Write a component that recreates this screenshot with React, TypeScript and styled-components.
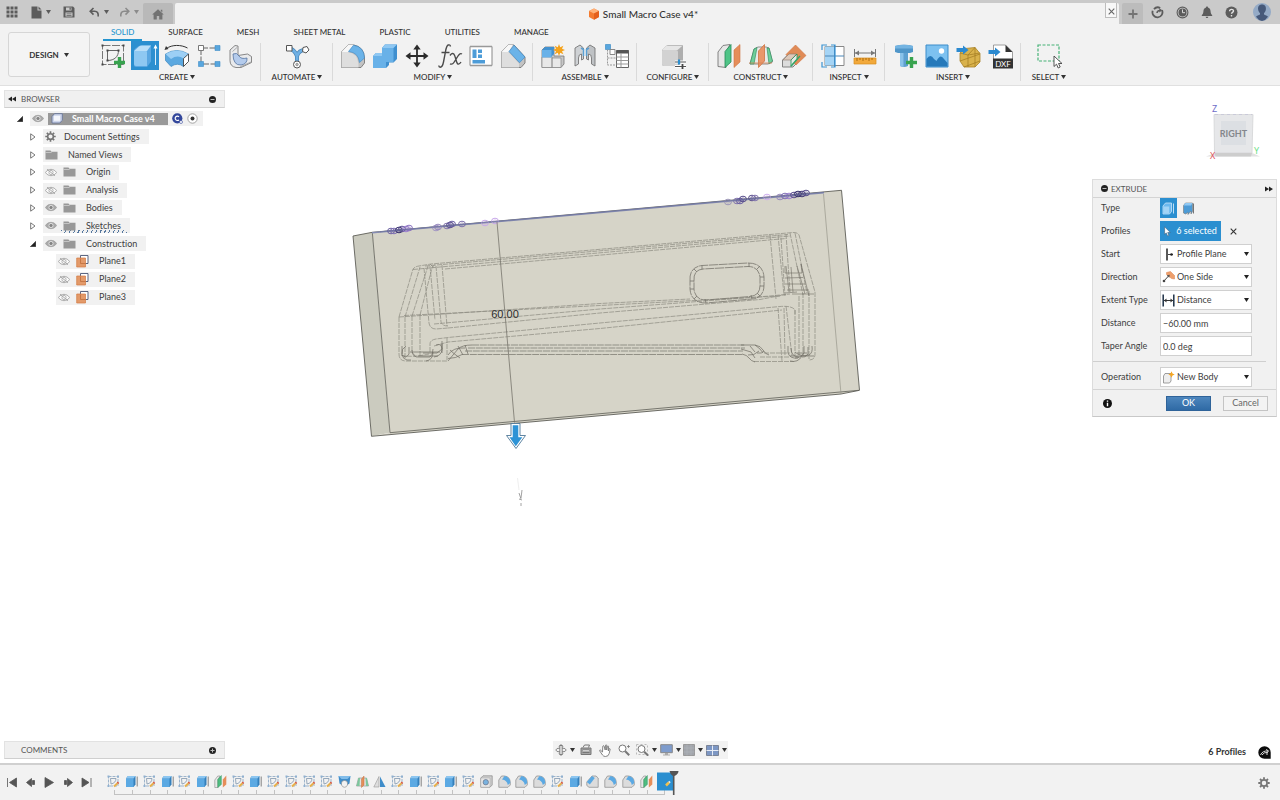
import React from 'react';
import styled, { createGlobalStyle } from 'styled-components';

const GlobalStyle = createGlobalStyle`
  *, *::before, *::after { box-sizing: border-box; }
  body { margin: 0; background: #fff; font-variant-ligatures: none; }
  body, button, input, select {
    font-family: Lato, "Noto Sans", sans-serif;
    font-size: 9px;
    line-height: 12px;
    color: #3d3d3d;
  }
  button { padding: 0; border: 0; background: none; cursor: pointer; }
  svg { display: block; flex: none; }
  ul { list-style: none; margin: 0; padding: 0; }
`;

const INK = '#5c5c5c';
const BLUE = '#6bb3e8';
const BLUE_DK = '#3a86c4';
const BLUE_LT = '#9ccff5';

/* ---------- page frame ---------- */

const Page = styled.div`
  min-height: 100vh;
  display: flex;
  flex-direction: column;
  background: #fff;
`;

const TitleBar = styled.header`
  display: flex;
  align-items: stretch;
  height: 24px;
  padding-top: 3px;
  background: #cacaca;
`;

const BarButton = styled.button<{ $w: number }>`
  width: ${p => p.$w}px;
  display: flex;
  align-items: center;
  justify-content: center;
  gap: 4px;
  padding-bottom: 3px;
`;

const HomeTab = styled.button`
  width: 30px;
  margin: 0 2px;
  display: flex;
  align-items: center;
  justify-content: center;
  padding-top: 2px;
  background: #b9b9b9;
  border-radius: 2px 2px 0 0;
`;

const DocumentTab = styled.div`
  flex: 1;
  display: flex;
  align-items: flex-start;
  background: #f2f2f2;
  border-radius: 2px 2px 0 0;
`;

const DocumentTitle = styled.h1`
  flex: 1;
  margin: 0;
  padding: 4px 0 0 6px;
  display: flex;
  justify-content: center;
  align-items: center;
  gap: 3px;
  font-size: 10px;
  line-height: 14px;
  font-weight: 500;
  color: #333;
`;

const CloseTab = styled.button`
  width: 12px;
  height: 15px;
  margin-right: 2px;
  display: flex;
  align-items: flex-end;
  justify-content: center;
  padding-bottom: 2px;
  border: 1px solid #bdbdbd;
  border-top: 0;
  background: #f8f8f8;
`;

const NewTab = styled.button`
  width: 21px;
  margin: 0 2px 0 3px;
  display: flex;
  align-items: center;
  justify-content: center;
  background: #bcbcbc;
  border-radius: 2px 2px 0 0;
`;

/* ---------- ribbon ---------- */

const Ribbon = styled.div`
  display: flex;
  height: 62px;
  background: #f2f2f2;
  border-bottom: 1px solid #e0e0e0;
`;

const Workspace = styled.button`
  width: 82px;
  height: 45px;
  margin: 8px 3px 0 8px;
  display: flex;
  align-items: center;
  justify-content: center;
  gap: 5px;
  border: 1px solid #d6d6d6;
  border-radius: 3px;
  background: #f4f4f4;
  font-size: 8px;
  font-weight: 700;
  color: #333;
`;

const RibbonMain = styled.div`
  display: flex;
  flex-direction: column;
  min-width: 0;
`;

const Tabs = styled.nav`
  display: flex;
  gap: 18px;
  height: 17px;
  padding-left: 10px;
`;

const Tab = styled.a<{ $on?: boolean }>`
  padding: 2px 8px 0;
  font-size: 8px;
  line-height: 12px;
  font-weight: 500;
  text-decoration: none;
  white-space: nowrap;
  color: ${p => (p.$on ? '#1f95cf' : '#333')};
  border-bottom: 2px solid ${p => (p.$on ? '#2494cf' : 'transparent')};
`;

const Groups = styled.div`
  display: flex;
`;

const Group = styled.section<{ $min?: number; $last?: boolean }>`
  min-width: ${p => p.$min ?? 72}px;
  height: 41px;
  padding: 0 4px;
  display: flex;
  flex-direction: column;
  align-items: center;
  background: ${p => (p.$last ? 'none' : 'linear-gradient(#dadada, #dadada) right 2px / 1px 38px no-repeat')};
`;

const GroupIcons = styled.div`
  display: flex;
`;

const Tool = styled.button<{ $on?: boolean }>`
  width: 32px;
  height: 29px;
  display: grid;
  place-items: center;
  background: ${p => (p.$on ? 'linear-gradient(#2b8fd0, #2b8fd0) center / 28px 29px no-repeat' : 'none')};
`;

const GroupMenu = styled.button`
  display: flex;
  align-items: center;
  gap: 2px;
  font-size: 8px;
  line-height: 14px;
  font-weight: 500;
  color: #2e2e2e;
  white-space: nowrap;
`;

/* ---------- canvas ---------- */

const Canvas = styled.main`
  flex: 1;
  display: grid;
  grid-template-columns: 221px 1fr 188px;
  grid-template-rows: 1fr;
  padding: 4px 0 0 4px;
`;

const Stage = styled.div`
  display: flex;
  justify-content: center;
  align-items: flex-start;
  padding: 90px 106px 0 0;
`;

const SideHeader = styled.div`
  display: flex;
  align-items: center;
  height: 18px;
  padding: 0 8px 0 3px;
  gap: 5px;
  background: #f0f0f0;
  border: 1px solid #e2e2e2;
  border-bottom-color: #cfcfcf;
  font-size: 8px;
  color: #555;
`;

const SideTitle = styled.h2<{ $indent?: number }>`
  flex: 1;
  margin: 0;
  padding-left: ${p => p.$indent ?? 0}px;
  font: inherit;
`;

const Tree = styled.ul`
  display: grid;
  grid-auto-rows: 1fr;
  height: 196px;
  margin-top: 2px;
`;

const Node = styled.li<{ $level: number }>`
  display: flex;
  align-items: center;
  padding-left: ${p => [10, 23, 23][p.$level]}px;
`;

const Twisty = styled.button`
  width: 16px;
  height: 12px;
  display: flex;
  align-items: center;
  padding-left: 3px;
`;

const TwistySpace = styled.span`
  width: 29px;
`;

const Chip = styled.div<{ $hatched?: boolean }>`
  height: 15px;
  display: flex;
  align-items: center;
  gap: 6px;
  padding: 0 9px 0 2px;
  background: ${p =>
    p.$hatched
      ? 'repeating-linear-gradient(115deg, #56789f 0 1px, transparent 1px 4px) 18px 12px / 66px 3px no-repeat, #f1f1f1'
      : '#f1f1f1'};
  white-space: nowrap;
`;

const NodeName = styled.span<{ $space: number }>`
  padding-left: ${p => p.$space}px;
`;

const RootChip = styled.div`
  height: 15px;
  display: flex;
  align-items: center;
  gap: 4px;
  padding: 0 5px 0 2px;
  background: #f1f1f1;
`;

const RootName = styled.span`
  height: 12px;
  display: flex;
  align-items: center;
  gap: 9px;
  width: 120px;
  padding-left: 3px;
  background: #999;
  color: #fff;
  font-weight: 700;
  white-space: nowrap;
`;

const Right = styled.aside`
  display: flex;
  flex-direction: column;
  padding-right: 3px;
`;

const CubeSlot = styled.div`
  display: flex;
  justify-content: flex-end;
  height: 89px;
  padding: 10px 15px 0 0;
`;

/* ---------- extrude panel ---------- */

const Panel = styled.form`
  border: 1px solid #dcdcdc;
  border-bottom-color: #c8c8c8;
  background: #f1f1f1;
`;

const PanelHeader = styled.div`
  display: flex;
  align-items: center;
  gap: 3px;
  height: 18px;
  padding: 0 3px 0 8px;
  border-bottom: 1px solid #d4d4d4;
  font-size: 8px;
  color: #555;
`;

const Fields = styled.div`
  display: grid;
  grid-template-columns: 59px 92px;
  grid-auto-rows: 20px;
  row-gap: 3px;
  align-items: center;
  padding: 0 0 5px 8px;
`;

const Operation = styled(Fields)`
  margin-right: 10px;
  padding: 5px 0 2px 8px;
  border-top: 1px solid #cfcfcf;
`;

const Inline = styled.div`
  display: flex;
  align-items: center;
  gap: 3px;
`;

const TypeButton = styled.button<{ $on?: boolean }>`
  width: 17px;
  height: 20px;
  display: grid;
  place-items: center;
  background: ${p => (p.$on ? '#2b8fd0' : 'none')};
`;

const Selected = styled.button`
  width: 61px;
  height: 20px;
  display: flex;
  align-items: center;
  justify-content: center;
  gap: 5px;
  background: #2b8fd0;
  color: #fff;
`;

const ClearButton = styled.button`
  width: 18px;
  height: 20px;
  display: grid;
  place-items: center;
`;

const Picker = styled.div`
  display: grid;
  grid-template-columns: 15px 1fr 10px;
  align-items: center;
  height: 20px;
  border: 1px solid #d0d0d0;
  background: #fff;
  & > svg { grid-row: 1; grid-column: 1; pointer-events: none; z-index: 1; justify-self: center; }
  & > svg:last-child { grid-column: 3; }
`;

const PickerSelect = styled.select`
  grid-row: 1;
  grid-column: 1 / -1;
  width: 100%;
  height: 18px;
  padding: 0 12px 0 16px;
  border: 0;
  background: transparent;
  appearance: none;
`;

const TextBox = styled.input`
  width: 100%;
  height: 20px;
  padding: 0 2px;
  border: 1px solid #d0d0d0;
  background: #fff;
`;

const PanelFooter = styled.div`
  display: flex;
  align-items: center;
  height: 27px;
  padding: 0 8px 0 10px;
  border-top: 1px solid #d4d4d4;
`;

const Action = styled.button<{ $primary?: boolean }>`
  width: 45px;
  height: 15px;
  margin-left: ${p => (p.$primary ? 'auto' : '12px')};
  border: 1px solid ${p => (p.$primary ? '#2f6399' : '#c4c4c4')};
  background: ${p => (p.$primary ? 'linear-gradient(#4d86bd, #2f6aa5)' : '#f3f3f3')};
  color: ${p => (p.$primary ? '#fff' : '#666')};
`;

/* ---------- lower bars ---------- */

const LowerRow = styled.div`
  display: grid;
  grid-template-columns: 1fr auto 1fr;
  align-items: center;
  padding: 0 4px 4px;
`;

const Comments = styled.div`
  width: 221px;
`;

const NavBar = styled.div`
  display: flex;
  height: 18px;
  background: #f2f2f2;
`;

const Status = styled.div`
  display: flex;
  align-items: center;
  justify-content: flex-end;
  gap: 12px;
  padding: 4px 5px 0 0;
  font-weight: 700;
  color: #333;
`;

const NavButton = styled.button<{ $w: number }>`
  width: ${p => p.$w}px;
  display: flex;
  align-items: center;
  justify-content: center;
  gap: 3px;
`;

const Timeline = styled.footer`
  display: flex;
  height: 37px;
  border-top: 2px solid #d0d0d0;
  background: #f2f2f2;
`;

const Playback = styled.div`
  width: 93px;
  margin: 0 9px 0 3px;
  display: grid;
  grid-template-columns: repeat(5, 1fr);
  height: 35px;
`;

const CenteredButton = styled.button`
  display: grid;
  place-items: center;
`;

const History = styled.div`
  width: 550px;
  display: flex;
  flex-direction: column;
  padding-top: 8px;
`;

const Features = styled.div`
  display: grid;
  grid-template-columns: repeat(31, 1fr);
  height: 17px;
`;

const Rail = styled.div`
  display: grid;
  grid-template-columns: repeat(31, 1fr);
  width: 551px;
  height: 5px;
  margin-left: 9px;
`;

const RailCell = styled.span`
  border: solid #c2c2c2;
  border-width: 0 0 1px 1px;
  &:last-child { border-right-width: 1px; }
`;

const Marker = styled.button`
  margin: 5px auto 0 1px;
  width: 24px;
  height: 26px;
  display: flex;
  z-index: 1;
`;

const SettingsButton = styled(CenteredButton)`
  width: 33px;
`;

/* ---------- small glyphs ---------- */

const Caret = ({ c = '#333', s = 5 }: { c?: string; s?: number }) => (
  <svg width={s} height={s - 1} viewBox="0 0 5 4"><path d="M0 0h5L2.500 4z" fill={c} /></svg>
);

const GridDots = () => (
  <svg width="12" height="12" viewBox="0 0 12 12" fill={INK}>
    {[0, 4, 8].map(y => [0, 4, 8].map(x => <rect key={`${x}${y}`} x={x + 0.5} y={y + 0.5} width="3" height="3" />))}
  </svg>
);
const FileGlyph = () => (
  <svg width="11" height="13" viewBox="0 0 11 13"><path d="M.5.5h6v4h4v8H.5zM7.500.5l3 3h-3z" fill={INK} /></svg>
);
const SaveGlyph = () => (
  <svg width="12" height="12" viewBox="0 0 12 12"><path d="M.5.5h9.500l1.500 1.500v9.500H.5zM3 1.500v3h5.500v-3zM2.500 6.500v4h7v-4z" fill={INK} fillRule="evenodd" /><path d="M6.500 1.500h1.300v2.300H6.500zM3.500 7.500h5v.8h-5zM3.500 9.200h5v.8h-5z" fill={INK} /></svg>
);
const Undo = ({ flip }: { flip?: boolean }) => (
  <svg width="11" height="11" viewBox="0 0 11 11">
    <g transform={flip ? 'translate(11 0) scale(-1 1)' : undefined} fill="none" stroke={flip ? '#8b8b8b' : INK} strokeWidth="1.600">
      <path d="M4.500 1 1.200 4.300l3.300 3.300M1.500 4.300h4.200c2.600 0 3.800 1.600 3.500 5.200" />
    </g>
  </svg>
);
const HomeGlyph = () => (
  <svg width="12" height="11" viewBox="0 0 12 11"><path d="M6 .3 11.800 5.600h-1.400V10.500H7.200V7H4.800v3.500H1.600V5.600H.2zM8.800.8h1.500v2.500L8.800 2z" fill="#737373" /></svg>
);
const OrangeCube = () => (
  <svg width="12" height="12" viewBox="0 0 12 12">
    <path d="M6 .5 11 3v6l-5 2.700L1 9V3z" fill="#f47b30" /><path d="M6 .5 11 3 6 5.500 1 3z" fill="#ffb27a" /><path d="M6 5.500 11 3v6l-5 2.700z" fill="#e4601c" />
  </svg>
);
const Cross = ({ s = 7, c = '#666' }: { s?: number; c?: string }) => (
  <svg width={s} height={s} viewBox="0 0 7 7"><path d="m.7.7 5.600 5.600M6.300.7.7 6.300" stroke={c} strokeWidth="1.100" /></svg>
);
const Plus = () => (
  <svg width="10" height="10" viewBox="0 0 10 10"><path d="M5 .5v9M.5 5h9" stroke="#747474" strokeWidth="1.800" /></svg>
);
const Extensions = () => (
  <svg width="13" height="13" viewBox="0 0 13 13" fill="none" stroke={INK}>
    <path d="M3 3.200a5 5 0 0 1 6.200-1.200M11 4.200a5 5 0 1 1-9.300.6" strokeWidth="1.800" />
    <path d="M6 7q0-2.300 3-2.500" strokeWidth="1.500" /><path d="m8.300 2.300 3 2-3 2.200z" fill={INK} stroke="none" />
  </svg>
);
const Clock = () => (
  <svg width="13" height="13" viewBox="0 0 13 13"><circle cx="6.500" cy="6.500" r="5.400" fill="none" stroke={INK} strokeWidth="1.100" /><circle cx="6.500" cy="6.500" r="4" fill={INK} /><path d="M6.500 3.500v3.200H9" stroke="#d8d8d8" fill="none" /></svg>
);
const Bell = () => (
  <svg width="12" height="13" viewBox="0 0 12 13"><path d="M6 .5c.8 0 1 .5 1 1 2 .6 2.500 2.300 2.600 4 .1 2 .8 2.800 1.600 3.700v.8H.8v-.8c.8-.9 1.500-1.700 1.600-3.700.1-1.700.6-3.400 2.600-4 0-.5.2-1 1-1zM4.700 10.800h2.600c0 1.700-2.600 1.700-2.600 0z" fill={INK} /></svg>
);
const Help = () => (
  <svg width="13" height="13" viewBox="0 0 13 13"><circle cx="6.500" cy="6.500" r="6" fill={INK} /><path d="M4.600 5.200c0-2.500 3.900-2.400 3.900-.2 0 1.400-2 1.400-2 2.800M6.500 9v1.400" fill="none" stroke="#e2e2e2" strokeWidth="1.400" /></svg>
);
const Avatar = () => (
  <svg width="18" height="18" viewBox="0 0 18 18">
    <circle cx="9" cy="9" r="9" fill="#94aac6" />
    <path d="M9 1.500c3 0 4.200 2.200 3.900 4.700-.2 1.700-.9 3-1.900 3.900v1.500c1.200.8 3.300 1 4 2.200A9 9 0 0 1 9 18a9 9 0 0 1-6-4.200c.7-1.200 2.800-1.400 4-2.200v-1.500C6 9.200 5.300 7.900 5.100 6.200 4.800 3.700 6 1.500 9 1.500z" fill="#46597a" />
  </svg>
);
const Gear = ({ s = 12 }: { s?: number }) => (
  <svg width={s} height={s} viewBox="0 0 12 12" fill="none" stroke="#757575">
    <circle cx="6" cy="6" r="3.100" strokeWidth="1.700" />
    <path d="M6 .3v2M6 9.700v2M.3 6h2M9.700 6h2M2 2l1.400 1.400M8.600 8.600 10 10M10 2 8.600 3.400M3.400 8.600 2 10" strokeWidth="1.800" />
  </svg>
);
const Dot = ({ plus }: { plus?: boolean }) => (
  <svg width="7" height="7" viewBox="0 0 7 7"><circle cx="3.500" cy="3.500" r="3.500" fill="#222" /><path d={plus ? 'M1.500 3.500h4M3.500 1.500v4' : 'M1.500 3.500h4'} stroke="#bbb" /></svg>
);
const DoubleArrow = ({ left }: { left?: boolean }) => (
  <svg width="8" height="6" viewBox="0 0 8 6"><path d={left ? 'M4 .5v5L0 3zM8 .5v5L4 3z' : 'M0 .5v5L4 3zM4 .5v5L8 3z'} fill="#222" /></svg>
);
const Closed = () => (
  <svg width="6" height="8" viewBox="0 0 6 8"><path d="M.7.8v6.400L5 4z" fill="#fff" stroke="#777" /></svg>
);
const Opened = () => (
  <svg width="6" height="6" viewBox="0 0 6 6"><path d="M5.800.2v5.600H.2z" fill="#222" stroke="#222" strokeWidth=".4" /></svg>
);
const Eye = ({ off }: { off?: boolean }) => (
  <svg width="12" height="9" viewBox="0 0 12 9">
    <path d="M.5 4.500C3 .3 9 .3 11.500 4.500 9 8.700 3 8.700.5 4.500z" fill={off ? '#fafafa' : '#a9a9a9'} stroke="#a3a3a3" strokeWidth=".9" />
    <circle cx="6" cy="4.500" r="2.100" fill={off ? 'none' : '#858585'} stroke={off ? '#a3a3a3' : '#eee'} strokeWidth=".8" />
    {off && <path d="m2 1.200 8 6.600" stroke="#a3a3a3" strokeWidth=".9" />}
  </svg>
);
const Folder = () => (
  <svg width="13" height="10" viewBox="0 0 13 10"><path d="M.5.5h5l1 1.200h6V9.500H.5z" fill="#989898" /><path d="M.5 2.500h5.500l1-.8" stroke="#d8d8d8" strokeWidth=".7" fill="none" /></svg>
);
const PlaneGlyph = () => (
  <svg width="13" height="13" viewBox="0 0 13 13"><path d="M4.500 3.500v-3h7.500v8H9.500" fill="#fff" stroke="#4a5675" strokeWidth=".9" /><path d="M.7 3h8.800v9H.7z" fill="#e39a6a" stroke="#d27a42" strokeWidth=".7" /><path d="M4.500 3.500v5h5" fill="none" stroke="#c0703d" strokeWidth=".8" /></svg>
);
const ComponentGlyph = () => (
  <svg width="12" height="11" viewBox="0 0 12 11"><path d="M1 3.500 3.500.7h7.800v6.500L8.800 10H1z" fill="#cdd5ea" stroke="#5f6f95" strokeWidth=".8" /><path d="M3 2.800h6v5H3z" fill="#f4f6fc" /></svg>
);
const CBadge = () => (
  <svg width="11" height="11" viewBox="0 0 11 11"><circle cx="5.300" cy="5.300" r="5.100" fill="#33479b" /><path d="M7 3.800a2.200 2.200 0 1 0 0 3" fill="none" stroke="#fff" strokeWidth="1.200" /><circle cx="9" cy="9" r="1.500" fill="#fff" stroke="#33479b" strokeWidth=".6" /></svg>
);
const RadioGlyph = () => (
  <svg width="11" height="11" viewBox="0 0 11 11"><circle cx="5.500" cy="5.500" r="4.700" fill="#fff" stroke="#8f8f8f" strokeWidth=".8" /><circle cx="5.500" cy="5.500" r="2" fill="#333" /></svg>
);

/* ---------- ribbon icons, 28 x 28 ---------- */

const I = ({ children, s = 28 }: { children: React.ReactNode; s?: number }) => (
  <svg width={s} height={s} viewBox="0 0 28 28" fill="none">{children}</svg>
);
const greenPlus = <path d="M20.500 15v11M15 20.500h11" stroke="#38a34f" strokeWidth="3.400" />;
const star = (x: number, y: number) => (
  <path transform={`translate(${x} ${y})`} d="m0-6 1.200 3.200L4.400-4.300 3-1.300 6 0 3 1.300l1.400 3-3.200-1.500L0 6l-1.200-3.200-3.200 1.500 1.400-3L-6 0l3-1.300-1.400-3 3.200 1.500z" fill="#f5a31c" />
);

const icons: Record<string, React.ReactNode> = {
  sketch: (
    <I>
      <path d="M3.500 3.500h21v19h-21z" stroke="#777" strokeDasharray="8 1.500" />
      <path d="M8.500 8.500h11c0 6-4 10-11 10z" stroke="#666" />
      <path d="M7.500 7.500h2v2h-2zM18.500 7.500h2v2h-2zM7.500 17.500h2v2h-2zM2.500 2.500h2v2h-2zM23.500 2.500h2v2h-2zM2.500 21.500h2v2h-2z" fill="#444" />
      {greenPlus}
    </I>
  ),
  extrude: (
    <I>
      <path d="M3 9q0-2 2-3l2-1.500q1-1 3-1h10v16L16 25H5q-2 0-2-2z" fill="#5aa7e2" />
      <path d="M3 9h12q1 0 1 1v14H5q-2 0-2-2z" fill="#8ec8f2" />
      <path d="M3 9 8 4.500q1-1 3-1h9L16 9z" fill="#b9def8" />
      <path d="M24.500 23V5" stroke="#d8eefc" /><path d="m22.500 6.500 2-4 2 4z" fill="#fff" />
    </I>
  ),
  revolve: (
    <I>
      <path d="M3.500 6.500C9 2.500 18 2.500 24.500 6" stroke="#333" /><path d="m1.500 8 1.500-4 2.500 3z" fill="#333" />
      <path d="M2.500 12q11-7 23 0v7l-5 5.500q-6-4.500-12.500 0l-5.500-6z" fill="#5ba8e0" stroke="#3c86bf" strokeWidth=".7" />
      <path d="M2.500 12q11-7 23 0l-5 4.500q-6-4-12.500.5z" fill={BLUE_LT} />
      <path d="m20.500 16.500 5-4.500v7.500l-5 5z" fill="#fff" stroke="#444" strokeWidth=".9" />
    </I>
  ),
  pattern: (
    <I>
      <path d="M6 6h17M6 6v16h17" stroke="#666" strokeDasharray="7 1.500" />
      <path d="M3.500 3.500h5v5h-5z" fill="#fff" stroke="#777" /><path d="M20 3.500h5v5h-5zM3.500 19.500h5v5h-5zM20 19.500h5v5h-5z" fill="#58a6de" stroke="#3f8ec7" strokeWidth=".6" />
    </I>
  ),
  form: (
    <I>
      <path d="m3 8 5-4.500 3 .5v9.500l9.500-1.500 4 2.500v6L14 25.500H9q-6-1-6-7z" fill="#e9eaec" stroke="#7c7c7c" strokeWidth=".9" />
      <path d="M5.500 9.500 10 5.500M13 25l11-5" stroke="#999" strokeWidth=".8" />
      <path d="M6 12q4-2 6 2 2 3.500 8 2 .5 6-6 7-8 .5-8-11z" fill="#b4cbec" stroke="#55739f" strokeWidth=".8" />
    </I>
  ),
  automate: (
    <I>
      <path d="M6 6q6 2 8 8 2-6 8-6M14 13v9" stroke="#4a86b8" strokeWidth="4" /><path d="M6 6q6 2 8 8 2-6 8-6M14 13v9" stroke="#6fb0e4" strokeWidth="2.600" />
      <path d="M3.500 3.500h5.500V9H3.500z" fill="#fff" stroke="#555" /><path d="m20 5.500 4-1 2 3.500-3 3-3.500-1.500z" fill="#fff" stroke="#555" /><circle cx="14" cy="22.500" r="3.500" fill="#fff" stroke="#555" /><circle cx="14" cy="22.500" r="1.300" fill="#bbb" stroke="#777" strokeWidth=".6" />
    </I>
  ),
  fillet: (
    <I>
      <path d="M2.500 10 9 3h6q10 2 10.500 13v5L22 25.500H2.500z" fill="#c3c3c3" stroke="#777" strokeWidth=".9" />
      <path d="M2.500 10h6q10 1 11 12v3.500h-17z" fill="#dedede" /><path d="M2.500 10 9 3h6l-5.500 7z" fill="#f7f7f7" />
      <path d="m9.500 9.500 5-6.300Q25 4.500 25.500 16l-5 4.500Q19.500 10.500 9.500 9.500z" fill={BLUE} stroke={BLUE_DK} strokeWidth=".6" />
    </I>
  ),
  combine: (
    <I>
      <path d="M2 14 5 11h6V6l3-3.500h12V17l-3.500 3.500H18V23l-3 3H2z" fill="#3f8fcf" />
      <path d="M2 14h9V6h11.500v14H15v6H2z" fill="#68b1e8" /><path d="m11 6 3-3.500h12L22.500 6zM2 14l3-3h6v3z" fill="#8fc8f3" />
    </I>
  ),
  move: (
    <I>
      <path d="M14 5v18M5 14h18" stroke="#2b2b2b" strokeWidth="1.800" />
      <path d="m14 2.500 3.700 5h-7.400zM14 25.500l-3.700-5h7.400zM2.500 14l5-3.700v7.400zM25.500 14l-5 3.700v-7.400z" fill="#2b2b2b" />
    </I>
  ),
  parameters: (
    <I>
      <path d="M15.500 4.500q-.5-2.200-2.300-1.500-1.700.7-2.700 6.500L8.500 20q-1 5-3.200 5.200-1.500 0-1.500-1.700M6.500 10.500h8" stroke="#4a4a4a" strokeWidth="1.400" />
      <path d="M15 13.500q2-3 3.800-1.500.9 1 2 5 1 4.500 2.200 5 1.500.5 3-2M27 12q-2-1.300-4 2l-4.100 6.500q-1.500 2.300-3.900 1.300" stroke="#4a4a4a" strokeWidth="1.400" />
    </I>
  ),
  sheet: (
    <I>
      <path d="M3 4.500h22v19H3z" fill="#fff" stroke="#888" /><path d="M3 4.500h22M3 23.500h22" stroke="#999" strokeWidth="1.500" />
      <path d="M5.500 7.500h4v8.500h-4zM11 7.500h4V11h-4zM11 12.500h4V16h-4zM5.500 18h12.500v3.500H5.500z" fill="#4d9cd8" />
    </I>
  ),
  chamfer: (
    <I>
      <path d="M2.500 10 9 3h6l11 12v6L22 25.500H2.500z" fill="#c3c3c3" stroke="#777" strokeWidth=".9" />
      <path d="M2.500 10h7L20 21.500v4H2.500z" fill="#dedede" /><path d="M2.500 10 9 3h5L9.500 10z" fill="#f7f7f7" />
      <path d="M10 9.500 15 3.200 26 15l-5.500 5.700z" fill={BLUE} stroke={BLUE_DK} strokeWidth=".6" />
    </I>
  ),
  component: (
    <I>
      <path d="m3 8 3-3h9v9h10v8l-3 3.500H3z" fill="#c6c6c6" stroke="#777" strokeWidth=".8" />
      <path d="M3 15h10v10.500H3zM13 16h9v9.500h-9z" fill="#e8e8e8" stroke="#888" strokeWidth=".7" />
      <path d="m3 8 3-3h9v7l-3 3H3z" fill="#4392d0" /><path d="M3 8h9.500v7.500H3z" fill="#68b1e8" />{star(20, 8)}
    </I>
  ),
  joint: (
    <I>
      <path d="m4 6 5-3 3.500 3v11l-2 1V12q-3 0-3 4v6L4 24z" fill="#cfd2d5" stroke="#777" strokeWidth=".9" />
      <path d="m24 6-5-3-3.500 3v11l2 1V12q3 0 3 4v6l3.500 2z" fill="#bfc2c5" stroke="#777" strokeWidth=".9" />
      <path d="m10 6 2.500 1.500V14M18 6l-2.500 1.500V14" stroke="#5a9fd3" strokeWidth="1.500" />
    </I>
  ),
  bom: (
    <I>
      <path d="M2.500 2.500h5v5h-5z" fill="#58a6de" stroke="#3f8ec7" strokeWidth=".7" /><path d="M7 7.500h5v5H7z" fill="#fff" stroke="#888" /><path d="M4.500 7.500V23H13M4.500 16H13" stroke="#999" strokeDasharray="2 1" />
      <path d="M13.500 8.500h12v17h-12z" fill="#fff" stroke="#666" /><path d="M13.500 8h12v3.500h-12z" fill="#555" /><path d="M13.500 15h12M13.500 18.500h12M13.500 22h12M18 11v14.500" stroke="#999" />
    </I>
  ),
  configure: (
    <I>
      <path d="M3 9q0-1 1-2l3-3q1-1 2-1h14q1 0 1 1v15l-5 5H5q-2 0-2-2z" fill="#aeaeae" /><path d="M3 9q0-1 1-1h13q2 0 2 2v14H5q-2 0-2-2z" fill="#d2d2d2" /><path d="m4 7 3.500-3.300H23.500L18.500 8H4z" fill="#e6e6e6" />
      <path d="M16 20h11M16 24.500h11" stroke="#fff" strokeWidth="3" /><path d="M16 20h11M16 24.500h11" stroke="#555" strokeWidth="1.200" /><path d="M20 17.500v5" stroke="#2b8fd0" strokeWidth="2.200" /><path d="M23.500 22v5" stroke="#444" strokeWidth="1.800" />
    </I>
  ),
  offsetPlane: (
    <I>
      <path d="m3 10 5-6.500 7-1L11 10v15.500l-8-1z" fill="#e6e6e6" stroke="#777" strokeWidth=".9" /><path d="m10 9.500 6-7v17.500l-6 5.500z" fill="#4fc487" stroke="#258c57" strokeWidth=".8" /><path d="m19 8 6-5.500V20l-6 5.500z" fill="#e58e5a" stroke="#cf7440" strokeWidth=".6" />
    </I>
  ),
  midplane: (
    <I>
      <path d="M3 22 7 7l4-2h8l3 1 3.500 14-4.500 2z" fill="#e9e9e9" stroke="#777" strokeWidth=".8" /><path d="M3 22 7 7l3-1.500L7 22zM20 6h2l3.500 13-3.500 3z" fill="#6fce9b" stroke="#258c57" strokeWidth=".6" /><path d="m11.500 9 6-6.500V19l-6 6.500z" fill="#e9976a" stroke="#cf7440" strokeWidth=".8" /><path d="M2 21h23" stroke="#d58455" strokeWidth=".8" />
    </I>
  ),
  planeAngle: (
    <I>
      <path d="m3.500 18 6-6H19v8l-5 5H3.500z" fill="#dcdcdc" stroke="#777" strokeWidth=".9" />
      <path d="m16.500 3 10.500 10.500-10 9.500L7 12.500z" fill="#e08b57" stroke="#cf7440" strokeWidth=".6" />
      <path d="m7 15 3-3h7.500l-5.500 6H4z" fill="#dcc9bb" stroke="#8c7768" strokeWidth=".6" /><path d="M12 18v6.500l6-7V12z" fill="#e6ebe7" stroke="#258c57" strokeWidth=".8" /><path d="m12 24 9-10" stroke="#2fa866" strokeWidth="1.300" />
    </I>
  ),
  analyze: (
    <I>
      <path d="M6 4.500h19v19H6z" fill="#fff" stroke="#888" /><path d="M6 4.500h10v19H6z" fill="#a5d4f5" /><path d="M6 14h19M15.500 3v22" stroke="#4b87b8" /><path d="M3 8V3h5M12 3h4v22h-4M3 20v5h5" stroke="#3a93d2" strokeWidth="1.200" />
    </I>
  ),
  measure: (
    <I>
      <path d="M3.500 7v8M24.500 7v8M4 11h20" stroke="#777" /><path d="m4 11 4-2.500v5zM24 11l-4-2.500v5z" fill="#777" /><path d="M3 16h22v6H3z" fill="#f2a93b" stroke="#d98c1c" strokeWidth=".7" /><path d="M6 16v3M9 16v2M12 16v3M15 16v2M18 16v3M21 16v2" stroke="#a3640c" strokeWidth=".9" />
    </I>
  ),
  bolt: (
    <I>
      <path d="M4 4q9-2.500 18 0v6l-3 1H7l-3-1z" fill="#5096c9" /><path d="M4 4q9-2.500 18 0v2.500H4z" fill="#74b4e2" /><path d="M9 11h8v13q-4 2-8 0z" fill="#5d9fd0" /><path d="M9 11h3.500v14L9 24z" fill="#8ac2ea" />{greenPlus}
    </I>
  ),
  image: (
    <I>
      <path d="M3 3h22v22H3z" fill="#7dc1f0" stroke="#3c8dca" /><path d="M3.500 17q4-6 7.500 0l2.500 2q4-8 7.500-2l3.500 4v3.500h-21z" fill="#2679ba" /><circle cx="18.500" cy="9" r="2.700" fill="#fff" />
    </I>
  ),
  mesh: (
    <I>
      <path d="m5 11 5-4.500 10-1 5 6v8.500l-5 5H9l-4-6z" fill="#d9b24c" stroke="#aa842a" strokeWidth=".8" /><path d="m5 11 8 2 12-2M13 13v12M9 25l16-6M5 19l20-7M13 13l7-7.500M20 5.500V25" stroke="#a07a20" strokeWidth=".7" /><path d="M1.500 6h6.500V3.500l5.500 4.500L8 12.500V10H1.500z" fill="#2c8ad0" />
    </I>
  ),
  dxf: (
    <I>
      <path d="M6.500 3h12l7 7v15h-19z" fill="#fff" stroke="#888" strokeWidth=".8" /><path d="M18.500 3v7h7z" fill="#333" /><path d="M6 16.500h20v10H6z" fill="#333" />
      <text x="16" y="25" fontSize="8" fontFamily="Lato, sans-serif" textAnchor="middle" fill="#fff">DXF</text>
      <path d="M1.500 8H8V5.500l5.500 4.500L8 14.500V12H1.500z" fill="#2c8ad0" />
    </I>
  ),
  select: (
    <I>
      <path d="M3 3h21v16H3z" stroke="#47b277" strokeWidth="1.200" strokeDasharray="3 1.500" /><path d="M19 14v10.500l2.500-2.300 1.700 3.800 2-1-1.700-3.500H27z" fill="#fff" stroke="#444" strokeWidth=".9" />
    </I>
  ),
};

const ribbon: { name: string; min?: number; tools: string[] }[] = [
  { name: 'CREATE', tools: ['sketch', 'extrude', 'revolve', 'pattern', 'form'] },
  { name: 'AUTOMATE', tools: ['automate'] },
  { name: 'MODIFY', tools: ['fillet', 'combine', 'move', 'parameters', 'sheet', 'chamfer'] },
  { name: 'ASSEMBLE', tools: ['component', 'joint', 'bom'] },
  { name: 'CONFIGURE', tools: ['configure'] },
  { name: 'CONSTRUCT', tools: ['offsetPlane', 'midplane', 'planeAngle'] },
  { name: 'INSPECT', tools: ['analyze', 'measure'] },
  { name: 'INSERT', tools: ['bolt', 'image', 'mesh', 'dxf'] },
  { name: 'SELECT', min: 56, tools: ['select'] },
];

const tabs = ['SOLID', 'SURFACE', 'MESH', 'SHEET METAL', 'PLASTIC', 'UTILITIES', 'MANAGE'];

/* ---------- browser tree ---------- */

type TreeItem = { name: string; level: number; open?: boolean; eye?: 'on' | 'off'; icon: 'gear' | 'folder' | 'plane'; hatched?: boolean };
const treeItems: TreeItem[] = [
  { name: 'Document Settings', level: 1, icon: 'gear' },
  { name: 'Named Views', level: 1, icon: 'folder' },
  { name: 'Origin', level: 1, eye: 'off', icon: 'folder' },
  { name: 'Analysis', level: 1, eye: 'off', icon: 'folder' },
  { name: 'Bodies', level: 1, eye: 'on', icon: 'folder' },
  { name: 'Sketches', level: 1, eye: 'on', icon: 'folder', hatched: true },
  { name: 'Construction', level: 1, open: true, eye: 'on', icon: 'folder' },
  { name: 'Plane1', level: 2, eye: 'off', icon: 'plane' },
  { name: 'Plane2', level: 2, eye: 'off', icon: 'plane' },
  { name: 'Plane3', level: 2, eye: 'off', icon: 'plane' },
];

const BrowserTree = () => (
  <Tree>
    <Node $level={0}>
      <Twisty aria-label="Collapse"><Opened /></Twisty>
      <RootChip>
        <Eye />
        <RootName><ComponentGlyph />Small Macro Case v4</RootName>
        <CBadge />
        <RadioGlyph />
      </RootChip>
    </Node>
    {treeItems.map(t => (
      <Node key={t.name} $level={t.level}>
        {t.level === 2 ? <TwistySpace /> : <Twisty aria-label={t.open ? 'Collapse' : 'Expand'}>{t.open ? <Opened /> : <Closed />}</Twisty>}
        <Chip $hatched={t.hatched}>
          {t.eye && <Eye off={t.eye === 'off'} />}
          {t.icon === 'gear' ? <Gear s={11} /> : t.icon === 'plane' ? <PlaneGlyph /> : <Folder />}
          <NodeName $space={t.icon === 'gear' ? 2 : 4}>{t.name}</NodeName>
        </Chip>
      </Node>
    ))}
  </Tree>
);

/* ---------- model drawing ---------- */

const rings: [number, number, string][] = [
  [391, 231, '#6b5fa0'], [394, 231, '#7d6eb4'], [399, 230, '#2f2866'], [402, 229, '#5b5092'], [406, 229, '#9a7ccf'], [409, 228, '#8b72c0'],
  [436, 228, '#a396c4'], [438, 227, '#9688bd'], [447, 226, '#8174ad'], [450, 225, '#564b8a'], [452, 224, '#6a5ea2'], [462, 224, '#7d70ab'],
  [485, 223, '#c8a8ea'], [495, 221, '#c8a8ea'],
  [728, 202, '#9d97b8'], [737, 201, '#8174ad'], [740, 201, '#6a5ea2'], [743, 199, '#564b8a'], [752, 198, '#564b8a'], [755, 198, '#8174ad'], [767, 197, '#cfaeee'],
  [780, 197, '#9688bd'], [785, 196, '#7d6eb4'], [789, 196, '#9a7ccf'], [794, 195, '#564b8a'], [798, 194, '#2f2866'], [802, 194, '#3c3372'], [806, 193, '#564b8a'],
];

const Model = () => (
  <svg width="520" height="340" viewBox="346 180 520 340" fill="none" role="img" aria-label="Extrude preview of a solid block">
    <path d="M353 236 372.300 232.300 390 432.700 371.500 436.300z" fill="#cbcbbf" />
    <path d="M372.300 232.300 841.500 190.300 859.500 390 841 394 371.500 436.300 390 432.700z" fill="#d6d4c8" />
    <g stroke="#5e5e57" strokeWidth=".9">
      <path d="M353 236 371.500 436.300 841 394 859.500 390.300 841.500 190.300" />
      <path d="M372.300 232.300 390 432.700 859 390.300" strokeWidth=".8" />
      <path d="M353 236 372.300 232.300 841.500 190.300" />
      <path d="m823.500 194 17.500 200" stroke="#98968b" strokeWidth=".7" />
    </g>
    <path d="M372 232.700 824 192.700" stroke="#868cb2" strokeWidth="1.500" />
    {rings.map(([x, y, c], i) => (
      <g key={i}>
        <ellipse cx={x} cy={y} rx="3.400" ry="2.800" stroke={c} strokeWidth="1" />
        <ellipse cx={x} cy={y} rx="1.500" ry="1.200" stroke={c} strokeWidth=".7" opacity=".7" />
      </g>
    ))}
    <path d="M380 231.800 824 192.300" stroke="#666d9a" strokeWidth=".6" />

    <g stroke="#8b897f" strokeWidth=".7" strokeDasharray="5 1">
      {/* lid */}
      <path d="M399 317 413 269q2-2.500 6-3l12-2L793 232.500q4-.5 6 2.500l16 57" />
      <path d="M413 269.500 440 267 790 236M425 266 788 234.500M445 269 786 238.500" />
      <path d="m405 317 15-50M412 316l16-50M420 315l12-47 3-4M430 264l4 4" />
      <path d="m424 268 5 55q1 6 7 6l12-1M430 266l5 54M436 266l5 56q1 4 7 4M442 265l5 61" />
      <path d="m770 235 6 64M778 235l6 60M781 238l4 58M786 234l4 58M790 233l13 62M795 233l12 60" />
      {/* seam and inner slot */}
      <path d="M399 317 600 303.500 690 299M404 315.500 600 305.500 780 296" />
      <path d="M434 324 600 309 770 296 790 294M448 328 600 313 760 299.500 786 294.500" />
      <path d="M430 352v-8q0-4 6-5l12-1.500L600 323 780 306.500q12-1 15 3.500v4M434 346l14-4L600 328.500 782 310" />
      {/* left wall */}
      <path d="M399 317v37q0 7 7 7h42M405 317v42M412 316v36l4 5M420 315v42M447 338v22M401 355q10 3 28-1" />
      {/* lower lip */}
      <path d="M472 345H745M468 348H745M465 351H743M462 354.500H742" stroke="#74726a" strokeDasharray="7 .8" />
      {/* right wall */}
      <path d="M815 292v62q0 6-6 6M809 291v68M803 293v62M799 296v60M795 310v46M784 308l1 48M778 308l4 53M786 306l6 50" />
      <path d="M754 361.500h40M760 357h30M764 353h26" />
    </g>

    <g stroke="#6e6c63" strokeWidth=".7">
      <path d="M472 345q-10 0-14 4l-10 12M465 348q-12-1-17 7M462 354.500q-6 4-14 4M450 350q4 4 10 8M458 346l5 9M465 345l3 9" />
      <path d="M402 346v9q1 4 5 5h4M406 346q-5 3-4 8M409 347v7q-3 5-7 1M412 350q0 8 8 7h10q3-2 3-8M423 353h14l5-4v-8M426 361q7-1 7-9M434 357q7-1 8-7v-6M418 356h20M410 352h30M436 345q7-3 6 8" />
      <path d="M741 345h14q6 1 8 5t6 5M742 354q5 1 7 4t6 4M741 349l10 3 4 6M755 345q6 4 8 8M750 346l5 6M748 355q6 1 11-4M757 353q5 1 7-2" />
      <path d="M788 346v7q2 6 10 5M791 348q0 9 8 9M795 352q5 5 14 3 4-2 3-9M804 346v7q-3 5-9 5M790 361q8 2 12-5M797 353h10M808 347v7q-3 4-6 3M790 356h24" />
      <path d="M785 266v7h17l-1-9M785 278l18-.5M785 284h20M787 290h22M792 294h22M786 266l3 26M791 267l2 25M797 266l8 28M801 264l8 32M785 293l12-1" strokeWidth=".6" />
    </g>

    <g stroke="#77756c" strokeWidth=".8" strokeDasharray="9 .7">
      <path d="M690 281q-1-14 12-15.500l46-2.500q15 0 16 14v8q0 13-12 14l-46 4q-15 0-16-14z" />
      <path d="M694 281q-1-11 9-12l45-2.500q11 0 12 11v8q0 10-10 11l-44 3.500q-11 0-12-11z" />
      <path d="M702 265.500v4M749 263v4M760 277h4M760 286h4M690 281h4M690 289h4M706 303l-1-4M752 299l-1-4M694 269l3 3M760 266l-3 3M694 299l3-3M760 296l-3-3" />
    </g>

    <path d="m497 222 17.500 200.500" stroke="#77756c" strokeWidth=".8" />
    <text x="505" y="318" fontSize="11" fontFamily="Liberation Sans, sans-serif" textAnchor="middle" fill="#2c2c2c">60.00</text>

    <path d="M511 423.500h9v12h5.500l-9.500 13-9.500-13h4.500z" fill="#fff" stroke="#4f7899" strokeWidth=".9" />
    <path d="M512.700 425.200h5.600v12h4l-6.500 9-6.300-9h3.200z" fill="#2d93d6" />
    <path d="m517.500 478 1.500 12" stroke="#e6e6e6" strokeWidth=".7" />
    <path d="m519 493 2 6M522 490l-1 8M519 499l3 1M521 503v3" stroke="#8a8a8a" strokeWidth=".8" />
  </svg>
);

const ViewCube = () => (
  <svg width="56" height="62" viewBox="1206 100 56 62" fontFamily="Noto Sans, sans-serif" fontSize="9">
    <path d="M1206 156.500 1220 151h28l12 5.500z" fill="#d5d5d5" opacity=".7" />
    <path d="M1214 114.500h39l-1 38.500h-37.500z" fill="#e6e7e9" stroke="#d3d4d6" strokeWidth=".8" />
    <path d="M1221 121h25v24h-25z" fill="#dcdfe3" />
    <path d="M1214.500 153h37.500l-1 3.500h-35.500z" fill="#cdcdcd" />
    <path d="M1215 114.500h37" stroke="#c5c5d8" strokeWidth=".8" strokeDasharray="3 3" />
    <text x="1233.500" y="137" textAnchor="middle" fontFamily="Lato, sans-serif" fontWeight="700" fill="#84878c">RIGHT</text>
    <text x="1212" y="112" fill="#6e6cc8">Z</text>
    <text x="1210" y="159" fill="#e0565b">X</text>
    <text x="1254" y="154" fill="#6fe088">Y</text>
  </svg>
);

/* ---------- panel glyphs ---------- */

const MiniExtrude = () => (
  <svg width="13" height="13" viewBox="0 0 13 13"><path d="m1 4 2.500-3h6v8.500L7.500 12H1z" fill="#6bb8ee" stroke="#c7e5fa" strokeWidth=".8" /><path d="M1.500 4.500h5.700v7H1.500z" fill="#a2d4f6" /><path d="M11.500 1.500v10" stroke="#e4f3fd" strokeWidth=".8" /></svg>
);
const MiniThin = () => (
  <svg width="13" height="13" viewBox="0 0 13 13"><path d="m1.500 3.500 2-2.500h7v8.500L9 12V9L6 12.500v-2L3.500 12l-2-1z" fill="#4c9bd6" stroke="#777" strokeWidth=".6" /><path d="m1.500 3.500 2-2.500h7l-1.500 2.500z" fill="#8fc8f3" /><path d="M11.500 1.500v10" stroke="#555" strokeWidth=".8" /></svg>
);
const Pointer = () => (
  <svg width="7" height="11" viewBox="0 0 7 11"><path d="M.6.8v7.500l1.700-1.400L3.600 10l1.300-.6-1.200-2.900h2.600z" fill="#fff" stroke="#40617f" strokeWidth=".6" /></svg>
);
const StartGlyph = () => (
  <svg width="12" height="13" viewBox="0 0 12 13"><path d="M4 .5v12" stroke="#222" strokeWidth="1.500" /><path d="M5 6.500h5" stroke="#444" /><circle cx="8.500" cy="6.500" r="1.300" fill="#222" /></svg>
);
const DirectionGlyph = () => (
  <svg width="13" height="12" viewBox="0 0 13 12"><path d="m4.500 1.500 4-1 4 4V8l-3-.5-5-4z" fill="#ee9f6c" stroke="#d88250" strokeWidth=".5" /><path d="m1.500 10.500 5-5.500" stroke="#444" /><circle cx="2" cy="10" r="1.300" fill="#444" /><path d="m4.800 4.300 3-.5-.6 3z" fill="#555" /></svg>
);
const ExtentGlyph = () => (
  <svg width="13" height="13" viewBox="0 0 13 13"><path d="M1.200.5v12M11.800.5v12" stroke="#1f3247" strokeWidth="1.500" /><path d="M2 6.500h9" stroke="#333" /><path d="m2 6.500 2.500-2v4zM11 6.500l-2.500-2v4z" fill="#333" /></svg>
);
const NewBodyGlyph = () => (
  <svg width="13" height="13" viewBox="0 0 13 13"><path d="M1.500 5 3 2.500h6V10l-1.500 2h-6z" fill="#eee" stroke="#888" strokeWidth=".8" /><path d="m9.500.3 1 2.200 2.200 1-2.200 1-1 2.200-1-2.200-2.200-1 2.200-1z" fill="#f5a623" /></svg>
);

const pickers = [
  { id: 'start', label: 'Start', value: 'Profile Plane', icon: <StartGlyph /> },
  { id: 'direction', label: 'Direction', value: 'One Side', icon: <DirectionGlyph /> },
  { id: 'extent', label: 'Extent Type', value: 'Distance', icon: <ExtentGlyph /> },
];

const PickerField = ({ id, label, value, icon }: (typeof pickers)[number]) => (
  <>
    <label htmlFor={id}>{label}</label>
    <Picker>
      <PickerSelect id={id} defaultValue={value}><option>{value}</option></PickerSelect>
      {icon}
      <Caret c="#222" />
    </Picker>
  </>
);

const ExtrudePanel = () => (
  <Panel onSubmit={e => e.preventDefault()}>
    <PanelHeader><Dot /><SideTitle>EXTRUDE</SideTitle><DoubleArrow /></PanelHeader>
    <Fields>
      <span>Type</span>
      <Inline>
        <TypeButton type="button" $on aria-label="Extrude"><MiniExtrude /></TypeButton>
        <TypeButton type="button" aria-label="Thin extrude"><MiniThin /></TypeButton>
      </Inline>
      <span>Profiles</span>
      <Inline>
        <Selected type="button"><Pointer />6 selected</Selected>
        <ClearButton type="button" aria-label="Clear selection"><Cross c="#333" /></ClearButton>
      </Inline>
      {pickers.map(p => <PickerField key={p.id} {...p} />)}
      <label htmlFor="distance">Distance</label>
      <TextBox id="distance" defaultValue="−60.00 mm" />
      <label htmlFor="taper">Taper Angle</label>
      <TextBox id="taper" defaultValue="0.0 deg" />
    </Fields>
    <Operation>
      <PickerField id="operation" label="Operation" value="New Body" icon={<NewBodyGlyph />} />
    </Operation>
    <PanelFooter>
      <svg width="9" height="9" viewBox="0 0 9 9"><circle cx="4.500" cy="4.500" r="4.500" fill="#111" /><path d="M4.500 1.500v1.300M4.500 3.800v3.500" stroke="#fff" strokeWidth="1.400" /></svg>
      <Action $primary type="submit">OK</Action>
      <Action type="button">Cancel</Action>
    </PanelFooter>
  </Panel>
);

/* ---------- navigation bar ---------- */

const nav: { name: string; w: number; menu?: boolean; icon: React.ReactNode }[] = [
  { name: 'Orbit', w: 25, menu: true, icon: <svg width="12" height="12" viewBox="0 0 12 12" fill="none" stroke="#777" strokeWidth=".9"><ellipse cx="6" cy="6" rx="5.200" ry="2" /><path d="M4.800 1.500h2.400v9H4.800z" fill="#eee" /><path d="m4 2.500 2-2 2 2M4 9.500l2 2 2-2" /></svg> },
  { name: 'Look at', w: 16, icon: <svg width="12" height="12" viewBox="0 0 12 12" fill="none" stroke="#777"><path d="M1 4h10v6.500H1z" fill="#a5a5a5" /><path d="M3 3.500 4.500 1h5l-1 2.500M2.500 6h7M2.500 8.500h7" stroke="#777" /><path d="M3 6.700h6" stroke="#ddd" /></svg> },
  { name: 'Pan', w: 22, icon: <svg width="12" height="13" viewBox="0 0 12 13" fill="#fff" stroke="#777" strokeWidth=".9"><path d="M3.500 8 1.300 6q-.9 0-.6.9L3.500 11q1 1.500 3 1.500 3 0 3.700-3l1-4.500q-.4-1-1.200 0L9.300 7l.3-4.700q-.6-1-1.200 0L7.700 6V1.200q-.6-1-1.200 0L6.200 6 5 2q-.8-.8-1.200.2z" /></svg> },
  { name: 'Zoom', w: 17, icon: <svg width="12" height="12" viewBox="0 0 12 12" fill="none" stroke="#777"><circle cx="4.500" cy="4.500" r="3.500" fill="#fff" /><path d="m7.200 7.200 4 4" strokeWidth="2" /><path d="M9 2.500h3M10.500 1v3" strokeWidth=".8" /></svg> },
  { name: 'Fit', w: 27, menu: true, icon: <svg width="13" height="12" viewBox="0 0 13 12" fill="none" stroke="#777"><path d="M.5.5h11v10H.5z" strokeDasharray="2 2" stroke="#bbb" /><circle cx="5.500" cy="5" r="3.500" fill="#fff" /><path d="m8.200 7.700 4 4" strokeWidth="2" /></svg> },
  { name: 'Display settings', w: 22, menu: true, icon: <svg width="13" height="12" viewBox="0 0 13 12"><path d="M.7.7h11.600v8H.7z" fill="#7e9ccd" stroke="#888" /><path d="M5 9h3v1.500h2v1H3v-1h2z" fill="#aaa" /></svg> },
  { name: 'Grid', w: 23, menu: true, icon: <svg width="12" height="12" viewBox="0 0 12 12"><path d="M.5.5h11v11H.5z" fill="#a2a5ab" stroke="#999" /><path d="M.5 4h11M.5 8h11M4 .5v11M8 .5v11" stroke="#b3b7bd" strokeWidth=".6" /></svg> },
  { name: 'Viewports', w: 23, menu: true, icon: <svg width="13" height="11" viewBox="0 0 13 11"><path d="M.5.5h12v10H.5z" fill="#7d97c4" stroke="#7b8496" /><path d="M6.500.5v10M.5 5.500h12" stroke="#e8edf6" /></svg> },
];

/* ---------- timeline ---------- */

const T = ({ children }: { children: React.ReactNode }) => (
  <svg width="13" height="13" viewBox="0 0 13 13" fill="none">{children}</svg>
);
const features: Record<string, React.ReactNode> = {
  s: <T><path d="M1.500 1.500h9.500v9.500H1.500z" stroke="#9db4cb" strokeDasharray="3 1" /><path d="M3.500 3.500H9c0 3-2 5-5 5.500z" stroke="#7f95ad" strokeWidth=".8" /><path d="M.5.5h2v2h-2zM10 .5h2v2h-2zM.5 10h2v2h-2z" fill="#8fb0d0" /><path d="m7 11.500 3.500-3.300" stroke="#e8b04a" strokeWidth="2" /><path d="m10.500 8.200 1-1" stroke="#d8503a" strokeWidth="2" /></T>,
  e: <T><path d="m1 3.500 2-2.500h7.500v8.500l-2 2.500H1z" fill="#3580bb" /><path d="M1 3.500h7.500V12H1z" fill="#5ba9e3" /><path d="m1 3.500 2-2.500h7.500l-2 2.500z" fill="#8cc6f1" /><path d="M12.200 1.500v10" stroke="#777" strokeWidth=".9" /></T>,
  p: <T><path d="m.8 5 3-4H6L4 5v7.500H.8z" fill="#e8e8e8" stroke="#888" strokeWidth=".6" /><path d="m3.800 4.500 3.500-4v9l-3.500 3z" fill="#4fbd80" stroke="#2b925b" strokeWidth=".5" /><path d="m8.800 4.500 3.500-4v9l-3.500 3z" fill="#e58e5a" /></T>,
  l: <T><path d="M.5 1h12l-1 7.500-3 2h-4l-3-2z" fill="#3f8dca" /><path d="M.5 1h12l-3 3h-6z" fill="#82bdea" /><path d="M3.500 8q0-2.500 3-2.500t3 2.500v2q-1 2.300-3 2.300T3.500 10z" fill="#f2f2f2" stroke="#888" strokeWidth=".6" /></T>,
  m: <T><path d="m.5 11 2-8h8l2 8z" fill="#e2e2e2" stroke="#888" strokeWidth=".6" /><path d="m.5 11 2-8h1.500L3.500 11zM9.500 3h1.300l1.700 8h-2.500z" fill="#7cc79d" /><path d="m5.500 4 2.500-3v9L5.500 12.500z" fill="#e58e5a" stroke="#c9723c" strokeWidth=".5" /></T>,
  r: <T><path d="M6 1.500V12H.8z" fill="#ddd" stroke="#999" strokeWidth=".6" /><path d="M7 1.500V12h5.500z" fill="#3f8dca" /></T>,
  h: <T><path d="M.8 3 3 .8h9.200V10L10 12.200H.8z" fill="#cfcfcf" stroke="#888" strokeWidth=".7" /><path d="M.8 3H10v9.200H.8z" fill="#e6e6e6" stroke="#999" strokeWidth=".4" /><circle cx="5.800" cy="7.200" r="2.700" fill="#79b2df" stroke="#667" strokeWidth=".6" /></T>,
  f: <T><path d="M.8 5 3.500 1h3q5.500.5 5.800 6.500V10L10 12.300H.8z" fill="#dcdcdc" stroke="#888" strokeWidth=".7" /><path d="M4 4.500 6.500 1Q12 1.500 12.300 8l-2.500 2Q9 5 4 4.500z" fill="#5ba9e3" /></T>,
  c: <T><path d="M12.200 3 10 1H6L.8 7v3.500L3 12.300h9.200z" fill="#dcdcdc" stroke="#888" strokeWidth=".7" /><path d="M.8 7 6 1l2.800 2-5 6.500z" fill="#5ba9e3" /></T>,
};
const sequence = 'sesesepsesssslmrseseshfffsecffp'.split('');

const playback = [
  { name: 'Go to start', d: 'M1.500 1v9M10.500 1v9L3.500 5.500z' },
  { name: 'Step back', d: 'M6.500 1.500v8L1.500 5.500zM7.500 3.500h2v4h-2z' },
  { name: 'Play', d: 'M2 .5v10l8.500-5z' },
  { name: 'Step forward', d: 'M5.500 1.500v8l5-4zM2.500 3.500h2v4h-2z' },
  { name: 'Go to end', d: 'M10 1v9M1 1v9l7-4.500z' },
];

export default function App() {
  return (
    <Page>
      <GlobalStyle />
      <TitleBar>
        <BarButton $w={24} aria-label="Data panel"><GridDots /></BarButton>
        <BarButton $w={33} aria-label="File"><FileGlyph /><Caret c={INK} /></BarButton>
        <BarButton $w={24} aria-label="Save"><SaveGlyph /></BarButton>
        <BarButton $w={36} aria-label="Undo"><Undo /><Caret c={INK} /></BarButton>
        <BarButton $w={24} aria-label="Redo"><Undo flip /><Caret c="#8b8b8b" /></BarButton>
        <HomeTab aria-label="Home"><HomeGlyph /></HomeTab>
        <DocumentTab>
          <DocumentTitle><OrangeCube />Small Macro Case v4*</DocumentTitle>
          <CloseTab aria-label="Close tab"><Cross /></CloseTab>
        </DocumentTab>
        <NewTab aria-label="New tab"><Plus /></NewTab>
        <BarButton $w={25} aria-label="Extensions"><Extensions /></BarButton>
        <BarButton $w={24} aria-label="Job status"><Clock /></BarButton>
        <BarButton $w={25} aria-label="Notifications"><Bell /></BarButton>
        <BarButton $w={24} aria-label="Help"><Help /></BarButton>
        <BarButton $w={37} aria-label="Account"><Avatar /></BarButton>
      </TitleBar>

      <Ribbon>
        <Workspace>DESIGN <Caret /></Workspace>
        <RibbonMain>
          <Tabs>{tabs.map((t, i) => <Tab key={t} href="#" $on={i === 0}>{t}</Tab>)}</Tabs>
          <Groups>
            {ribbon.map(g => (
              <Group key={g.name} $min={g.min} $last={g.name === 'SELECT'}>
                <GroupIcons>
                  {g.tools.map(t => <Tool key={t} aria-label={t} $on={t === 'extrude'}>{icons[t]}</Tool>)}
                </GroupIcons>
                <GroupMenu>{g.name}<Caret /></GroupMenu>
              </Group>
            ))}
          </Groups>
        </RibbonMain>
      </Ribbon>

      <Canvas>
        <aside>
          <SideHeader><DoubleArrow left /><SideTitle>BROWSER</SideTitle><Dot /></SideHeader>
          <BrowserTree />
        </aside>
        <Stage><Model /></Stage>
        <Right>
          <CubeSlot><ViewCube /></CubeSlot>
          <ExtrudePanel />
        </Right>
      </Canvas>

      <LowerRow>
        <Comments><SideHeader><SideTitle $indent={13}>COMMENTS</SideTitle><Dot plus /></SideHeader></Comments>
        <NavBar>
          {nav.map(n => <NavButton key={n.name} $w={n.w} aria-label={n.name}>{n.icon}{n.menu && <Caret />}</NavButton>)}
        </NavBar>
        <Status>
          6 Profiles
          <svg width="13" height="13" viewBox="0 0 13 13"><path d="M6.500.3a6.200 6.200 0 0 1 6.200 6.200v6.200H6.500a6.200 6.200 0 0 1 0-12.400z" fill="#0c0c0c" /><path d="M2.500 9q2-4.500 7.500-4M4 9q2-3 5-2.500V9M8 3.500l2.500 1.300L9 7" stroke="#eee" strokeWidth=".9" fill="none" /></svg>
        </Status>
      </LowerRow>

      <Timeline>
        <Playback>
          {playback.map(p => (
            <CenteredButton key={p.name} aria-label={p.name}>
              <svg width="12" height="11" viewBox="0 0 12 11"><path d={p.d} fill="#555" stroke="#555" strokeWidth=".8" /></svg>
            </CenteredButton>
          ))}
        </Playback>
        <History>
          <Features>
            {sequence.map((f, i) => <CenteredButton key={i} aria-label={`Feature ${i + 1}`}>{features[f]}</CenteredButton>)}
          </Features>
          <Rail>{sequence.map((_, i) => <RailCell key={i} />)}</Rail>
        </History>
        <Marker aria-label="Current feature">
          <svg width="24" height="26" viewBox="0 0 24 26"><path d="M1 2.500h17v18H1z" fill="#2b8fd0" /><path d="m10 15.500 3-3" stroke="#f2c14e" strokeWidth="2.500" /><path d="m13 12.500 1-1" stroke="#f0f0f0" strokeWidth="2" /><path d="M13.500 1h9q0 3-4 5v19h-1.600V6q-3-2-3.400-5z" fill="#555" /></svg>
        </Marker>
        <SettingsButton aria-label="Timeline settings"><Gear /></SettingsButton>
      </Timeline>
    </Page>
  );
}
